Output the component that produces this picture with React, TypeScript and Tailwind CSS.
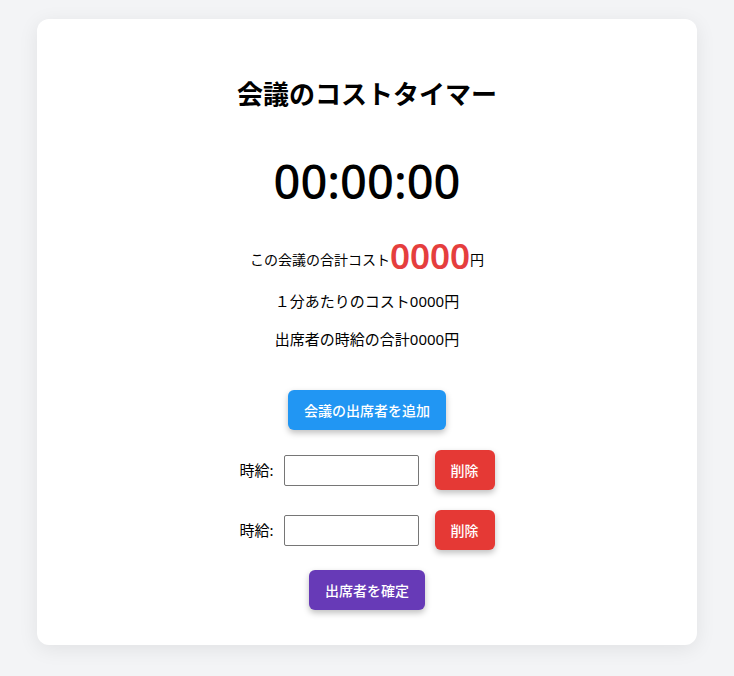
import React from "react";

export default function App() {
  const font = { fontFamily: '"Noto Sans", "Noto Sans CJK JP", sans-serif' };
  return (
    <div className="min-h-screen w-full bg-[#f3f4f6] pt-[19px]" style={font}>
      <div className="mx-auto w-[660px] rounded-xl bg-white pt-[57px] pb-[35px] text-center text-black shadow-[0_4px_20px_rgba(0,0,0,0.08)]">
        <h1 className="text-[26px] font-bold leading-[36px]">会議のコストタイマー</h1>
        <div className="mt-[45px] text-[47px] leading-[48px] font-medium">00:00:00</div>
        <div className="mt-[31px] flex items-end justify-center leading-[40px]">
          <span className="text-[14px] leading-[24px] mb-[4px]">この会議の合計コスト</span>
          <span className="text-[35px] font-semibold leading-[40px] text-[#e53e3e]">0000</span>
          <span className="text-[14px] leading-[24px] mb-[4px]">円</span>
        </div>
        <div className="mt-[13px] text-[15px] leading-[24px]">１分あたりのコスト0000円</div>
        <div className="mt-[14px] text-[15px] leading-[24px]">出席者の時給の合計0000円</div>
        <div className="mt-[39px] flex flex-col items-center gap-5">
          <button className="h-10 w-[158px] rounded-md bg-[#2196f3] text-[14px] font-medium text-white shadow-[0_3px_6px_rgba(0,0,0,0.25)]">
            会議の出席者を追加
          </button>
          {[0, 1].map((i) => (
            <div key={i} className="flex items-center">
              <span className="text-[15px]">時給:</span>
              <input
                type="text"
                className="ml-[10px] h-[31px] w-[135px] rounded-[2px] border border-[#767676] bg-white px-2"
              />
              <button className="ml-4 h-10 w-[60px] rounded-md bg-[#e53935] text-[14px] font-medium text-white shadow-[0_3px_6px_rgba(0,0,0,0.25)]">
                削除
              </button>
            </div>
          ))}
          <button className="h-10 w-[116px] rounded-md bg-[#673ab7] text-[14px] font-medium text-white shadow-[0_3px_6px_rgba(0,0,0,0.25)]">
            出席者を確定
          </button>
        </div>
      </div>
    </div>
  );
}
